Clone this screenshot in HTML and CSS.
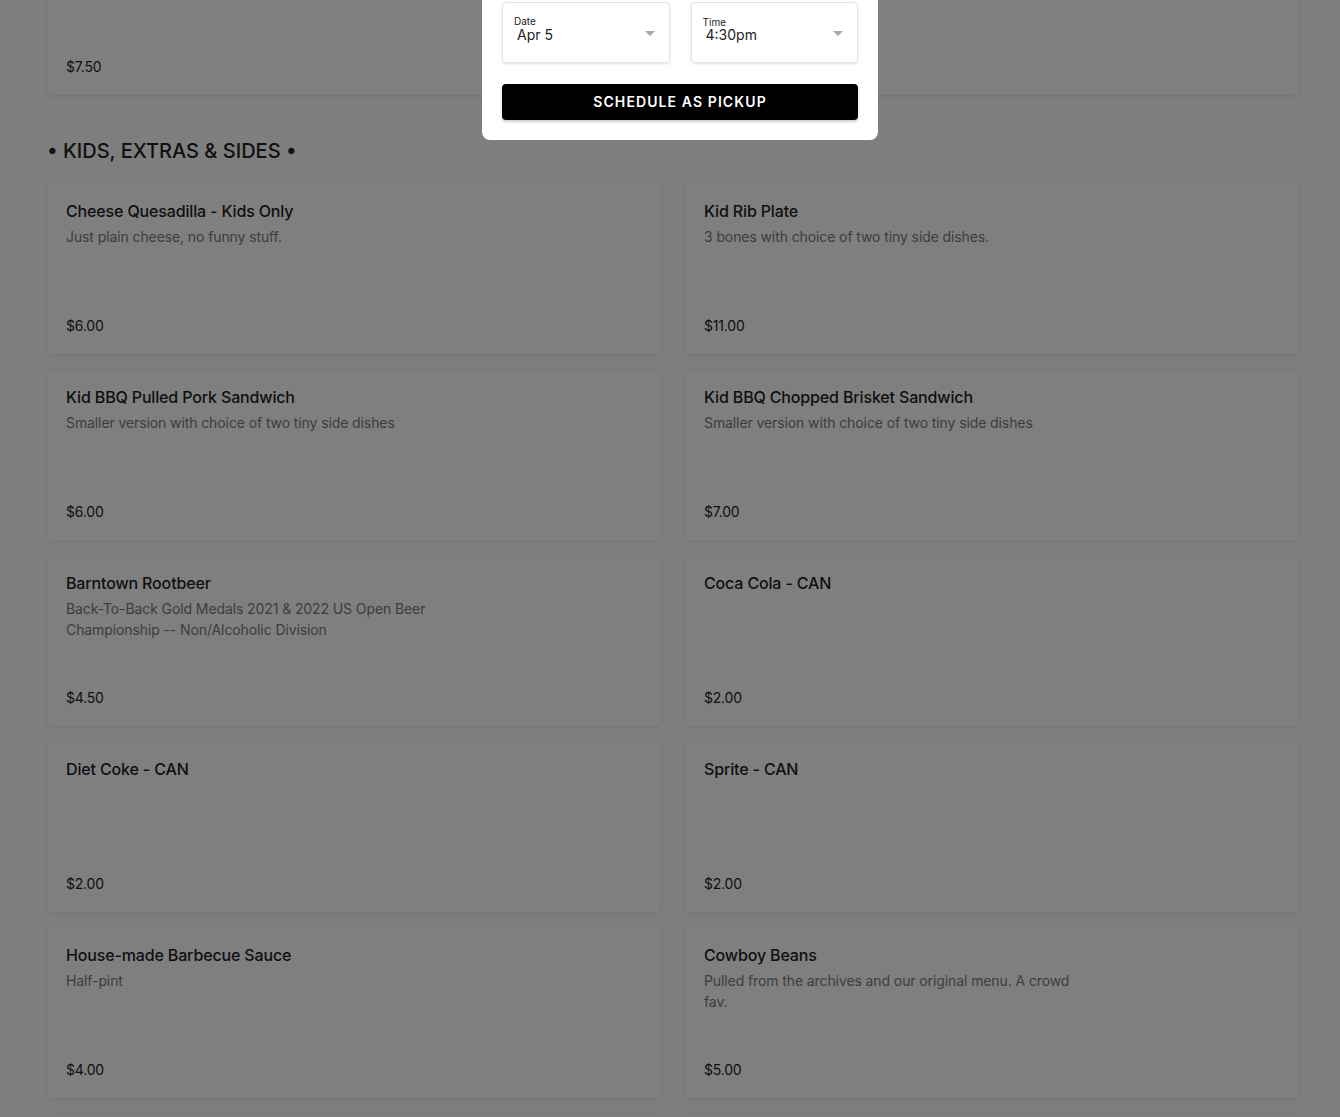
FILE: index.html
```html
<!DOCTYPE html>
<html lang="en">
<head>
<meta charset="utf-8">
<title>Menu</title>
<link rel="stylesheet" href="styles.css">
</head>
<body>
<main class="menu">
  <div class="grid">
    <div class="card"><div class="title">&nbsp;</div><div class="price">$7.50</div></div>
    <div class="card"><div class="title">&nbsp;</div><div class="price">&nbsp;</div></div>
  </div>

  <h2 class="section-title">• KIDS, EXTRAS &amp; SIDES •</h2>

  <div class="grid">
    <div class="card">
      <div class="title">Cheese Quesadilla - Kids Only</div>
      <div class="desc">Just plain cheese, no funny stuff.</div>
      <div class="price">$6.00</div>
    </div>
    <div class="card">
      <div class="title">Kid Rib Plate</div>
      <div class="desc">3 bones with choice of two tiny side dishes.</div>
      <div class="price">$11.00</div>
    </div>
    <div class="card">
      <div class="title">Kid BBQ Pulled Pork Sandwich</div>
      <div class="desc">Smaller version with choice of two tiny side dishes</div>
      <div class="price">$6.00</div>
    </div>
    <div class="card">
      <div class="title">Kid BBQ Chopped Brisket Sandwich</div>
      <div class="desc">Smaller version with choice of two tiny side dishes</div>
      <div class="price">$7.00</div>
    </div>
    <div class="card">
      <div class="title">Barntown Rootbeer</div>
      <div class="desc">Back-To-Back Gold Medals 2021 &amp; 2022 US Open Beer Championship -- Non/Alcoholic Division</div>
      <div class="price">$4.50</div>
    </div>
    <div class="card">
      <div class="title">Coca Cola - CAN</div>
      <div class="price">$2.00</div>
    </div>
    <div class="card">
      <div class="title">Diet Coke - CAN</div>
      <div class="price">$2.00</div>
    </div>
    <div class="card">
      <div class="title">Sprite - CAN</div>
      <div class="price">$2.00</div>
    </div>
    <div class="card">
      <div class="title">House-made Barbecue Sauce</div>
      <div class="desc">Half-pint</div>
      <div class="price">$4.00</div>
    </div>
    <div class="card">
      <div class="title">Cowboy Beans</div>
      <div class="desc">Pulled from the archives and our original menu. A crowd fav.</div>
      <div class="price">$5.00</div>
    </div>
    <div class="card"><div class="title">&nbsp;</div><div class="price">&nbsp;</div></div>
    <div class="card"><div class="title">&nbsp;</div><div class="price">&nbsp;</div></div>
  </div>
</main>

<div class="overlay"></div>

<div class="modal">
  <div class="selects">
    <div class="select">
      <div class="label">Date</div>
      <div class="value">Apr 5</div>
      <span class="caret"></span>
    </div>
    <div class="select time">
      <div class="label">Time</div>
      <div class="value">4:30pm</div>
      <span class="caret"></span>
    </div>
  </div>
  <button class="btn">SCHEDULE AS PICKUP</button>
</div>
</body>
</html>
```

FILE: styles.css
```css
* { box-sizing: border-box; }
html, body { margin: 0; padding: 0; }
body {
  background: #fdfdfd;
  font-family: Inter, "Noto Sans", sans-serif;
  color: #222;
  height: 1117px;
  overflow: hidden;
}
.menu {
  width: 1250px;
  margin: -75px 0 0 48px;
}
.grid {
  display: grid;
  grid-template-columns: 612px 612px;
  column-gap: 26px;
  row-gap: 16px;
}
.card {
  background: #fff;
  border-radius: 4px;
  box-shadow: 0 1px 5px rgba(0,0,0,0.10);
  min-height: 170px;
  padding: 17px 18px 19px;
  display: flex;
  flex-direction: column;
}
.title {
  font-size: 16px;
  font-weight: 500;
  line-height: 20px;
  color: #1e1e1e;
  letter-spacing: -0.15px;
}
.desc {
  margin-top: 5px;
  font-size: 14px;
  line-height: 21px;
  color: #7a7a7a;
  max-width: 366px;
  letter-spacing: -0.1px;
}
.price {
  margin-top: auto;
  font-size: 14px;
  line-height: 18px;
  color: #222;
  letter-spacing: -0.2px;
}
.section-title {
  margin: 44px 0 21px -1px;
  font-size: 20px;
  font-weight: 500;
  line-height: 24px;
  color: #222;
  letter-spacing: 0;
}
.overlay {
  position: fixed;
  inset: 0;
  background: rgba(0,0,0,0.5);
}
.modal {
  position: fixed;
  left: 482px;
  top: -20px;
  width: 396px;
  background: #fff;
  border-radius: 8px;
  padding: 22px 20px 20px;
}
.selects {
  display: flex;
  gap: 21px;
}
.select {
  position: relative;
  flex: 1;
  height: 61px;
  border: 1px solid #e2e2e2;
  border-radius: 4px;
  box-shadow: 0 1px 3px rgba(0,0,0,0.12);
  padding: 12px 11px 0;
}
.select .label {
  font-size: 10px;
  line-height: 12px;
  color: #222;
}
.select .value {
  font-size: 14px;
  line-height: 16px;
  color: #222;
  padding-left: 3px;
}
.select.time { padding-top: 15px; }
.select.time .label { line-height: 9px; }
.caret {
  position: absolute;
  right: 14px;
  top: 28px;
  width: 0;
  height: 0;
  border-left: 5px solid transparent;
  border-right: 5px solid transparent;
  border-top: 5px solid #aaa;
}
.btn {
  display: block;
  width: 100%;
  margin-top: 21px;
  height: 36px;
  padding: 0 0 2px;
  border: 0;
  border-radius: 4px;
  background: #000;
  color: #fff;
  font-family: Inter, "Noto Sans", sans-serif;
  font-size: 14px;
  font-weight: 600;
  letter-spacing: 1.1px;
  box-shadow: 0 2px 3px rgba(0,0,0,0.2);
}
```
